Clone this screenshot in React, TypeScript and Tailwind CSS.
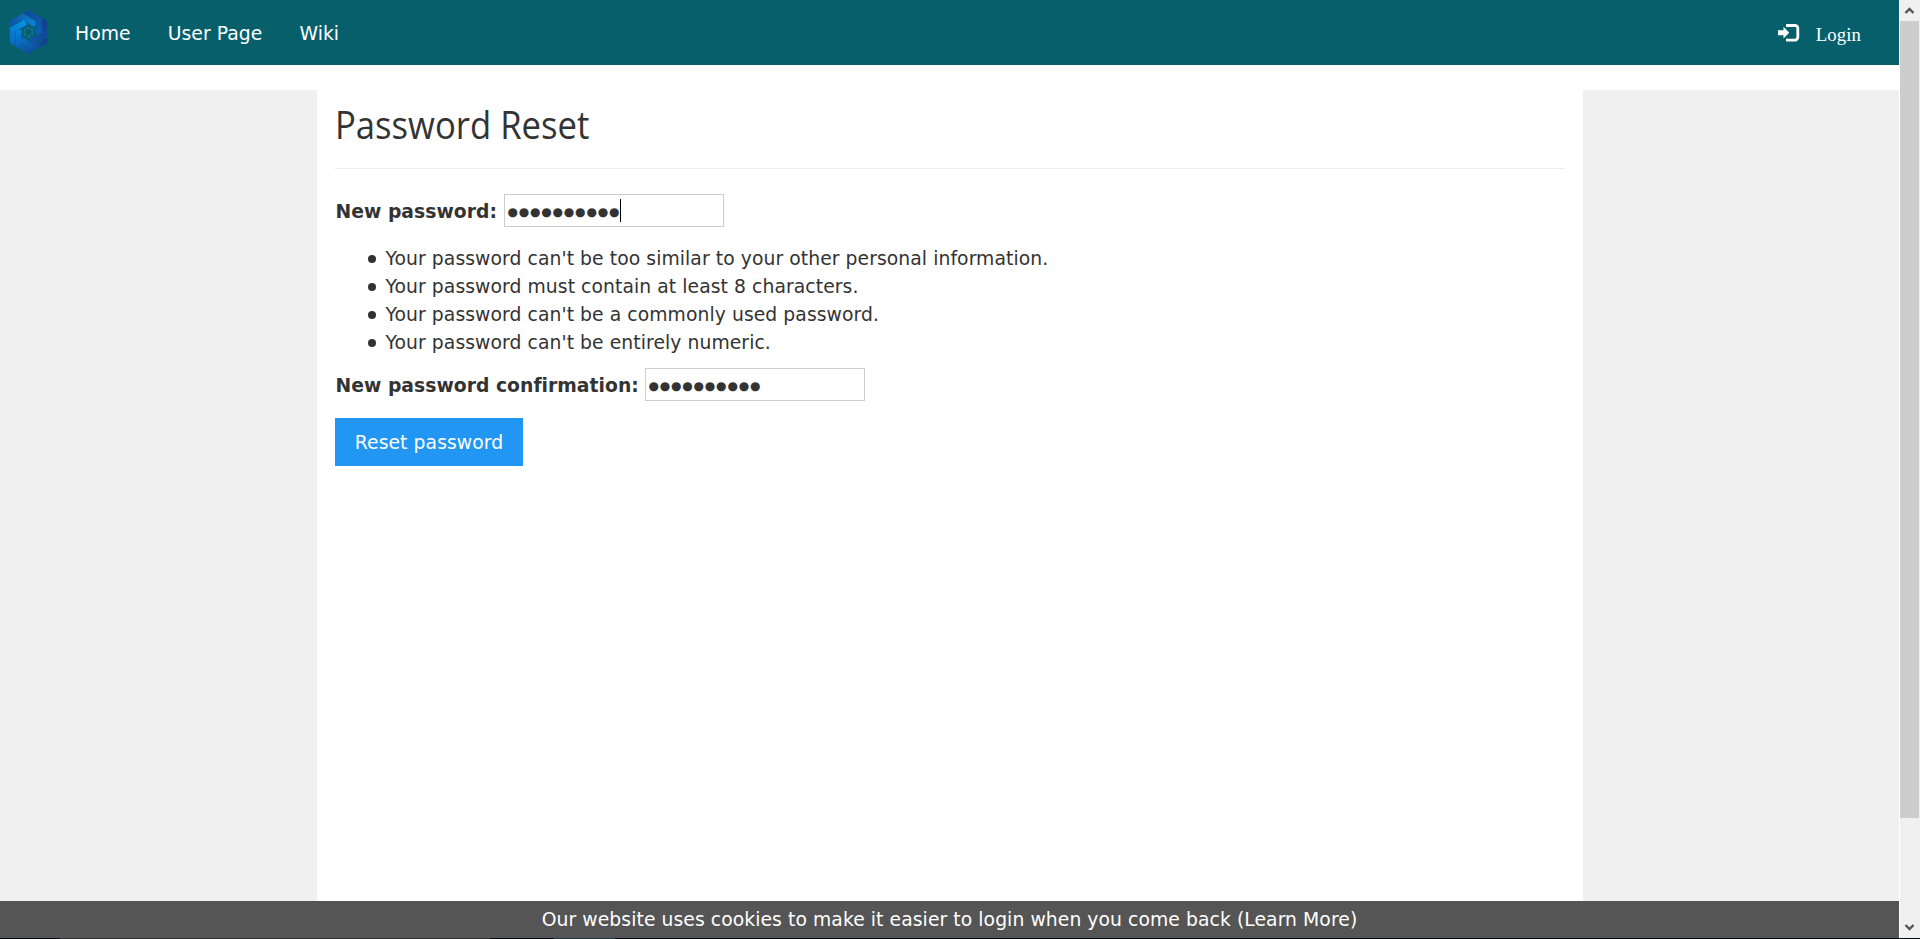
import React from "react";

const rules = [
  "Your password can't be too similar to your other personal information.",
  "Your password must contain at least 8 characters.",
  "Your password can't be a commonly used password.",
  "Your password can't be entirely numeric.",
];

const blades = [
  { angle: 0, from: "#0e52a6", to: "#0a80d0" },
  { angle: 60, from: "#0f4c9c", to: "#0d5fae" },
  { angle: 120, from: "#123d8c", to: "#0f55a6" },
  { angle: 180, from: "#123a88", to: "#0a6cc0" },
  { angle: 240, from: "#0f4a9a", to: "#0682dc" },
  { angle: 300, from: "#0b68bc", to: "#0492ea" },
];

function Logo() {
  return (
    <svg className="-mt-px ml-[9px] h-[46px] w-[39px]" viewBox="-19.5 -23 39 46">
      <defs>
        <clipPath id="hex">
          <polygon points="0,-22 19,-11 19,11 0,22 -19,11 -19,-11" />
        </clipPath>
        {blades.map((b) => (
          <linearGradient key={b.angle} id={`blade${b.angle}`} gradientUnits="userSpaceOnUse" x1="-19" y1="-10" x2="6" y2="-9">
            <stop offset="0" stopColor={b.from} />
            <stop offset="1" stopColor={b.to} />
          </linearGradient>
        ))}
      </defs>
      <g clipPath="url(#hex)">
        {blades.map((b) => (
          <g key={b.angle} transform={`rotate(${b.angle})`}>
            <polyline points="-21,-7 -6.5,-15.3 7,-7.5" fill="none" stroke={`url(#blade${b.angle})`} strokeWidth="5.9" />
          </g>
        ))}
      </g>
      <circle r="4.2" fill="none" stroke="#0b70b0" strokeWidth="2.2" strokeDasharray="3 1.4" />
    </svg>
  );
}

function LoginIcon() {
  return (
    <svg className="h-[18px] w-[22px]" viewBox="0 0 22 18">
      <path d="M0 6.3h5.5V2.8L11.2 8.7L5.5 14.6V11.2H0z" fill="#fff" />
      <path d="M8 1.5h9a2.8 2.8 0 0 1 2.8 2.8v9a2.8 2.8 0 0 1-2.8 2.8H8" fill="none" stroke="#fff" strokeWidth="2.8" />
    </svg>
  );
}

function PasswordField({ label, focused }: { label: string; focused?: boolean }) {
  return (
    <div className="flex h-[33px] items-center">
      <label className="whitespace-nowrap pl-px pt-[3px] font-bold tracking-[0.03px]">{label}</label>
      <div className="ml-auto flex h-[33px] w-[220px] items-center border border-[#ccc] bg-white pl-[3px]">
        <span className="pt-[3px] text-[12px] leading-[28px] tracking-[0.8px]">●●●●●●●●●●</span>
        {focused && <span className="h-[23px] w-px bg-black" />}
      </div>
    </div>
  );
}

export default function App() {
  return (
    <div className="flex h-[939px] w-[1920px] flex-col overflow-hidden bg-white font-['DejaVu_Sans',Verdana,sans-serif] text-[18.75px] tracking-[0.075px] text-[#333]">
      <div className="flex h-[938px]">
        <div className="flex w-[1899px] flex-col">
          <nav className="flex h-[65px] shrink-0 items-center bg-[#085f6c] text-white">
            <Logo />
            <a className="ml-[27px] pt-[3px]">Home</a>
            <a className="ml-[37px] pt-[3px]">User Page</a>
            <a className="ml-[37px] pt-[3px]">Wiki</a>
            <div className="ml-auto flex items-center pr-[38px]">
              <LoginIcon />
              <span className="ml-[16px] mt-[6px] font-['Liberation_Serif',serif]">Login</span>
            </div>
          </nav>
          <div className="mt-[25px] flex h-[811px] bg-[#f0f0f0]">
            <main className="mx-auto w-[1266px] bg-white px-[18px]">
              <h1 className="flex h-[78px] origin-left scale-x-[0.924] items-center whitespace-nowrap pb-[8px] font-['Open_Sans','Noto_Sans',sans-serif] text-[37.5px] leading-[56px] tracking-normal">
                Password Reset
              </h1>
              <hr className="border-[#eee]" />
              <div className="mt-[25px] w-[389px]">
                <PasswordField label="New password:" focused />
              </div>
              <ul className="mt-[18px] leading-[28px]">
                {rules.map((r) => (
                  <li key={r} className="flex items-center">
                    <span className="ml-[33px] mr-[10px] size-[8px] rounded-full bg-[#333]" />
                    {r}
                  </li>
                ))}
              </ul>
              <div className="mt-[11px] w-[530px]">
                <PasswordField label="New password confirmation:" />
              </div>
              <button className="mt-[17px] h-[48px] w-[188px] whitespace-nowrap bg-[#2196f3] pl-px pt-[2px] text-white">
                Reset password
              </button>
            </main>
          </div>
          <footer className="flex h-[37px] items-center justify-center bg-[#555] pt-[2px] text-white">
            Our website uses cookies to make it easier to login when you come back (Learn More)
          </footer>
        </div>
        <div className="flex w-[21px] flex-col border-l border-white bg-[#f0f0f0]">
          <svg className="h-[21px] w-[20px]" viewBox="0 0 20 21">
            <path d="M5.5 13L9.5 9L13.5 13" fill="none" stroke="#555" strokeWidth="2.4" />
          </svg>
          <div className="h-[797px] w-[19px] bg-[#cdcdcd]" />
          <svg className="mt-auto h-[21px] w-[20px]" viewBox="0 0 20 21">
            <path d="M5.5 8L9.5 12L13.5 8" fill="none" stroke="#555" strokeWidth="2.4" />
          </svg>
        </div>
      </div>
      <div className="flex h-px bg-[#03090c]">
        <div className="ml-[60px] w-[430px] bg-[#332f31]" />
        <div className="ml-[64px] w-[61px] bg-[#203a42]" />
      </div>
    </div>
  );
}
